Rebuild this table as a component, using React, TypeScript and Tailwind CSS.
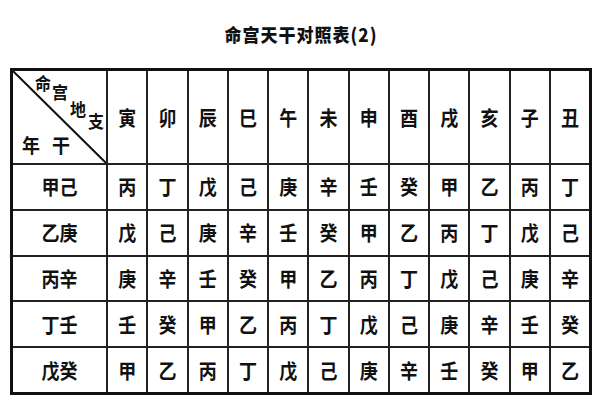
import React from "react";

const branches = ["寅", "卯", "辰", "巳", "午", "未", "申", "酉", "戌", "亥", "子", "丑"];

const rows: [string, string][] = [
  ["甲己", "丙丁戊己庚辛壬癸甲乙丙丁"],
  ["乙庚", "戊己庚辛壬癸甲乙丙丁戊己"],
  ["丙辛", "庚辛壬癸甲乙丙丁戊己庚辛"],
  ["丁壬", "壬癸甲乙丙丁戊己庚辛壬癸"],
  ["戊癸", "甲乙丙丁戊己庚辛壬癸甲乙"],
];

const cjk = "font-['Noto_Sans_CJK_SC','Noto_Sans_CJK_TC',sans-serif]";

function Cell({ text }: { text: string }) {
  return (
    <div className="bg-white flex items-center justify-center text-[18px] font-semibold">
      <span className="scale-y-115">{text}</span>
    </div>
  );
}

export default function App() {
  return (
    <div className={`w-[600px] h-[400px] bg-white text-[#111] ${cjk}`}>
      {/* title */}
      <div className="h-[68px] flex justify-center pt-[24px] pl-[2px]">
        <h1 className="text-[17px] leading-[22px] font-black tracking-[1px] scale-y-110">
          命宫天干对照表(2)
        </h1>
      </div>

      {/* table */}
      <div className="ml-[10px] w-[582px] h-[327px] border-[3px] border-[#111] bg-[#222]">
        <div className="grid h-full grid-cols-[93px_repeat(12,1fr)] grid-rows-[92px_repeat(5,1fr)] gap-[2px]">
          {/* diagonal header */}
          <div className="relative bg-white flex flex-col justify-between pb-[10px]">
            <svg className="absolute inset-0 w-full h-full" preserveAspectRatio="none" viewBox="0 0 100 100">
              <line x1="0" y1="0" x2="100" y2="100" stroke="#111" strokeWidth="2" vectorEffect="non-scaling-stroke" />
            </svg>
            <div className="flex items-start pl-[22px] leading-none font-semibold">
              <span className="shrink-0 mt-[3px] text-[16px] scale-y-110">命</span>
              <span className="shrink-0 mt-[12px] ml-[1px] text-[16px] scale-y-110">宫</span>
              <span className="shrink-0 mt-[29px] ml-[2px] text-[16px] scale-y-110">地</span>
              <span className="shrink-0 mt-[41px] ml-[2px] text-[16px] scale-y-110">支</span>
            </div>
            <div className="flex gap-[12px] pl-[9px] text-[18px] leading-none font-semibold">
              <span className="scale-y-110">年</span>
              <span className="scale-y-110">干</span>
            </div>
          </div>
          {branches.map((b) => (
            <Cell key={b} text={b} />
          ))}

          {rows.map(([year, cells]) => (
            <React.Fragment key={year}>
              <Cell text={year} />
              {cells.split("").map((c, i) => (
                <Cell key={i} text={c} />
              ))}
            </React.Fragment>
          ))}
        </div>
      </div>
    </div>
  );
}
